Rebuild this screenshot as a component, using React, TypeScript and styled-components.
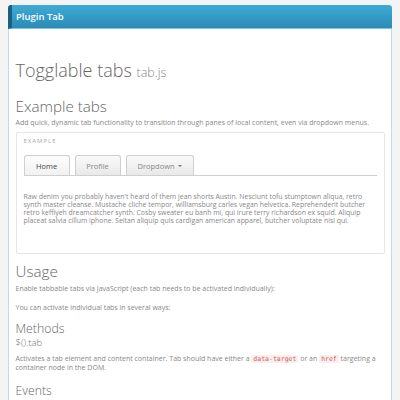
import styled, { createGlobalStyle } from 'styled-components';

const GlobalStyle = createGlobalStyle`
  html, body {
    margin: 0;
    padding: 0;
    background: #f4f4f4;
    font-family: "Open Sans", "Noto Sans", sans-serif;
  }
`;

export default function App() {
  return (
    <>
      <GlobalStyle />
      <Panel>
        <Header>Plugin Tab</Header>
        <Body>
          <Title>
            Togglable tabs <small>tab.js</small>
          </Title>
          <SectionTitle>Example tabs</SectionTitle>
          <Text top={3}>
            Add quick, dynamic tab functionality to transition through panes of local content, even via dropdown menus.
          </Text>

          <ExampleBox>
            <ExampleLabel>EXAMPLE</ExampleLabel>
            <TabBar>
              <Tab active>Home</Tab>
              <Tab>Profile</Tab>
              <Tab wide>
                Dropdown <Caret />
              </Tab>
            </TabBar>
            <TabPane>
              Raw denim you probably haven't heard of them jean shorts Austin. Nesciunt tofu stumptown aliqua, retro
              synth master cleanse. Mustache cliche tempor, williamsburg carles vegan helvetica. Reprehenderit butcher
              retro keffiyeh dreamcatcher synth. Cosby sweater eu banh mi, qui irure terry richardson ex squid. Aliquip
              placeat salvia cillum iphone. Seitan aliquip quis cardigan american apparel, butcher voluptate nisi qui.
            </TabPane>
          </ExampleBox>

          <SectionTitle top={8}>Usage</SectionTitle>
          <Text top={4}>Enable tabbable tabs via JavaScript (each tab needs to be activated individually):</Text>
          <Text top={9}>You can activate individual tabs in several ways:</Text>
          <SubTitle top={8}>Methods</SubTitle>
          <MethodName>$().tab</MethodName>
          <Text top={5} lh={9}>
            Activates a tab element and content container. Tab should have either a <Code>data-target</Code> or
            an <Code>href</Code> targeting a container node in the DOM.
          </Text>
          <SubTitle top={11}>Events</SubTitle>
        </Body>
      </Panel>
    </>
  );
}

const Panel = styled.div`
  margin: 5px 8px 0 8px;
  width: 384px;
  box-sizing: border-box;
  border-radius: 3px 3px 0 0;
  overflow: hidden;
  background: #fff;
`;

const Header = styled.div`
  height: 24px;
  box-sizing: border-box;
  display: flex;
  align-items: center;
  padding-left: 4px;
  color: #fff;
  font-size: 9.5px;
  font-weight: 600;
  background: linear-gradient(#3eabd5, #2b8bb7);
  border-left: 4px solid #1d5f7e;
  border-bottom: 1px solid #80c4e2;
`;

const Body = styled.div`
  border-left: 1.5px solid #c6d8ef;
  border-right: 1.5px solid #c6d8ef;
  padding: 0 6.5px 20px 6.5px;
  color: #666;
  display: flex;
  flex-direction: column;
  align-items: flex-start;
  min-height: 380px;
`;

const Title = styled.h1`
  margin: 30px 0 0 0;
  font-size: 18px;
  line-height: 22px;
  font-weight: 300;
  color: #666;

  small {
    font-size: 12.5px;
    color: #888;
  }
`;

const SectionTitle = styled.h2<{ top?: number }>`
  margin: ${(p) => p.top ?? 13}px 0 0 0;
  font-size: 15.2px;
  line-height: 18px;
  font-weight: 300;
  color: #666;
`;

const Text = styled.p<{ top?: number; lh?: number }>`
  margin: ${(p) => p.top ?? 0}px 0 0 0;
  font-size: 7px;
  line-height: ${(p) => p.lh ?? 10}px;
  color: #888;
`;

const ExampleBox = styled.div`
  margin-top: 4px;
  align-self: stretch;
  border: 1px solid #e6e6e6;
  border-radius: 2px;
  padding: 4px 7px 28px 7px;
`;

const ExampleLabel = styled.div`
  font-size: 6px;
  line-height: 8px;
  letter-spacing: 1px;
  color: #aaa;
`;

const TabBar = styled.div`
  margin-top: 10px;
  display: flex;
  gap: 5px;
  border-bottom: 1px solid #cfcfcf;
`;

const Tab = styled.div<{ active?: boolean; wide?: boolean }>`
  width: ${(p) => (p.wide ? 68 : 46)}px;
  height: 20px;
  box-sizing: border-box;
  display: flex;
  align-items: center;
  justify-content: center;
  gap: 3px;
  font-size: 7.5px;
  color: ${(p) => (p.active ? '#444' : '#888')};
  border: 1px solid #cfcfcf;
  border-bottom: none;
  border-radius: 3px 3px 0 0;
  background: ${(p) =>
    p.active ? 'linear-gradient(#fdfdfd, #f1f1f1)' : 'linear-gradient(#fafafa, #e9e9e9)'};
`;

const Caret = styled.span`
  width: 0;
  height: 0;
  border-left: 2.5px solid transparent;
  border-right: 2.5px solid transparent;
  border-top: 2.5px solid #777;
`;

const TabPane = styled.p`
  margin: 17px 0 0 0;
  font-size: 6.9px;
  line-height: 8px;
  color: #888;
`;

const SubTitle = styled.h3<{ top?: number }>`
  margin: ${(p) => p.top ?? 0}px 0 0 0;
  font-size: 12.3px;
  line-height: 16px;
  font-weight: 300;
  color: #666;
`;

const MethodName = styled.div`
  font-size: 9.5px;
  line-height: 12px;
  font-weight: 300;
  color: #777;
`;

const Code = styled.code`
  font-family: "DejaVu Sans Mono", monospace;
  font-size: 6.5px;
  line-height: 7px;
  color: #d0625c;
  background: #fbeeee;
  border-radius: 2px;
  padding: 0 2px;
`;
